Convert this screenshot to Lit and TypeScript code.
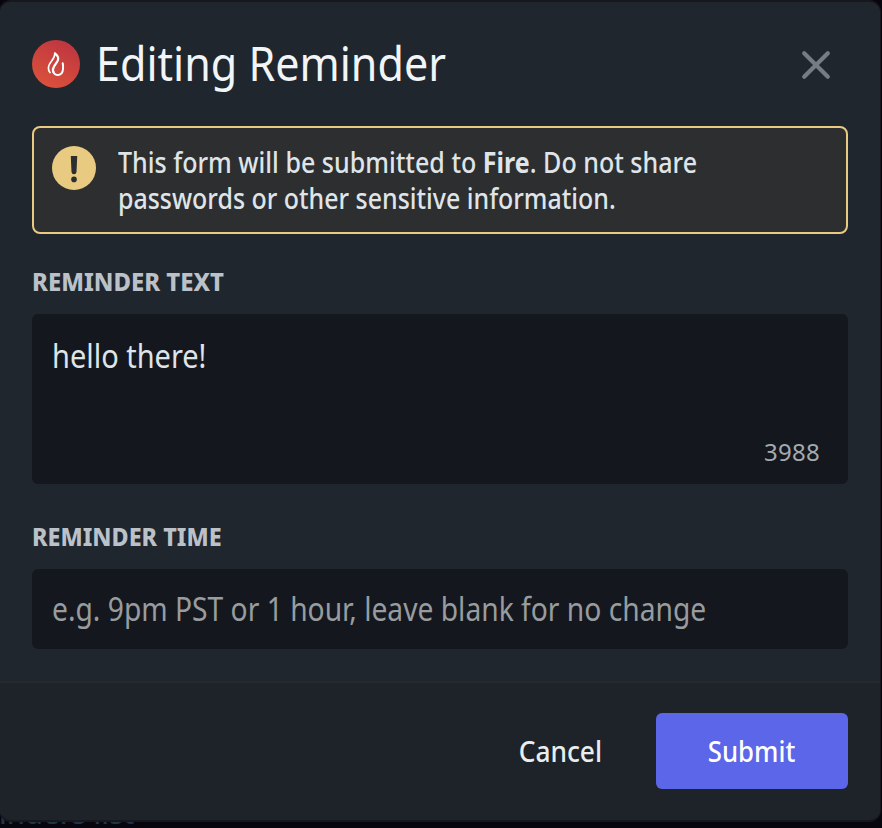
import { LitElement, html, css, svg } from "lit";
import { customElement } from "lit/decorators.js";

const logo = svg`<svg class="logo" viewBox="0 0 48 48">
  <defs><linearGradient id="g" x1="0.75" y1="0" x2="0.25" y2="1"><stop offset="0" stop-color="#bd3540"/><stop offset="1" stop-color="#dc523b"/></linearGradient></defs>
  <circle cx="24" cy="24" r="24" fill="url(#g)"/>
  <g fill="none" stroke="#fff" stroke-linecap="round" stroke-linejoin="round">
    <path stroke-width="1.700" d="M22.800 13C23.300 19.800 16.600 22 16.400 27.500C16.300 29.800 16.900 31.200 18 32.500"/>
    <path stroke-width="2.200" d="M23.200 13.700C28.200 17.500 26 21.200 23.300 24.500C21 27.500 20.300 30 21.500 32.300"/>
    <path stroke-width="2" d="M21.300 31.500C22 36 30.500 37 31 29C31.200 26.800 31.100 25 30.700 23.300"/>
  </g>
  </svg>`;

@customElement("app-root")
export class AppRoot extends LitElement {
  static styles = css`
    :host { display: block; height: 828px; position: relative; overflow: hidden; background: #07050e;
      font-family: "Noto Sans", sans-serif; color: #dfe4e8; }
    * { box-sizing: border-box; }
    .behind { position: absolute; left: -1px; top: 798px; font-weight: 500; font-size: 29px; line-height: 30px; height: 30px; color: #1f3444; white-space: nowrap; }
    .modal { position: relative; width: 882px; height: 822px; margin-left: -1px; border: solid #17181d; border-width: 2px 1px 2px 1px;
      border-radius: 12px; background: #20262d; display: flex; flex-direction: column; overflow: hidden; }
    .body { height: 679px; padding: 38px 32px 0; }
    header { display: flex; align-items: center; height: 48px; }
    .logo { width: 48px; height: 48px; flex: none; }
    h1 { margin: -2px 0 0 16px; flex: 1; font-weight: 400; font-size: 47px; line-height: 60px; color: #f2f5f7; white-space: nowrap; }
    .close { width: 32px; height: 32px; margin: 2px 16px 0 0; }
    .warning { display: flex; margin-top: 38px; height: 108px; border: 2px solid #e8ca80; border-radius: 8px; background: #2d2e30; padding: 18px; }
    .warn-icon { width: 44px; height: 44px; flex: none; }
    .warning p { margin: -2px 0 0 22px; font-weight: 500; font-size: 28px; line-height: 36px; white-space: nowrap; }
    .warning b { font-weight: 700; }
    .label { margin-top: 33px; height: 30px; font-weight: 800; font-size: 24px; line-height: 29px; color: #bac1c9; white-space: nowrap; }
    .field { margin-top: 17px; border-radius: 6px; background: #14181e; padding: 20px; font-size: 32px; line-height: 44px; white-space: nowrap; }
    .area { height: 170px; display: flex; flex-direction: column; align-items: flex-start; justify-content: space-between; padding-bottom: 17px; }
    .count { align-self: flex-end; margin-right: 8px; font-size: 24px; line-height: 30px; color: #a4aab0; letter-spacing: 0.3px; }
    .label.time { margin-top: 38px; }
    .line { height: 80px; padding-top: 18px; color: #989c9f; }
    footer { flex: 1; border-top: 2px solid #25282d; background: #1e2229; display: flex; align-items: flex-start; justify-content: flex-end; padding: 30px 32px 0; }
    button { border: 0; padding: 0; height: 76px; font: 500 28px/76px "Noto Sans", sans-serif; color: #e8edf0; background: none; border-radius: 6px; white-space: nowrap; }
    .cancel { width: 192px; }
    .submit { width: 192px; background: #5b66e8; color: #fff; }
    .t { display: inline-block; transform-origin: 0 50%; }
    .t1 { transform: scaleX(0.916); }
    .t2 { transform: scaleX(0.895); }
    .t3 { transform: scaleX(0.891); }
    .t4 { transform: scaleX(0.995); }
    .t5 { transform: scaleX(0.905); }
    .t6 { transform: scaleX(0.972); }
    .t7 { transform: scaleX(0.882); }
    .t8 { transform: scaleX(0.94); transform-origin: center; }
    .t9 { transform: scaleX(0.92); transform-origin: center; }
  `;

  render() {
    return html`
      <div class="behind">inders list</div>
      <div class="modal">
        <div class="body">
          <header>
            ${logo}
            <h1><span class="t t1">Editing Reminder</span></h1>
            <svg class="close" viewBox="0 0 32 32"><path d="M4.200 4.200L27.800 27.800M27.800 4.200L4.200 27.800" stroke="#757c84" stroke-width="4.200" stroke-linecap="round" fill="none"/></svg>
          </header>
          <div class="warning">
            <svg class="warn-icon" viewBox="0 0 44 44"><circle cx="22" cy="22" r="22" fill="#e8ca80"/><path d="M19.300 10h5.400q.5 0 .5.600l-.7 15.400q-.3 2.200-2.500 2.200t-2.500-2.200l-.7-15.400q0-.6.500-.6z" fill="#2d2e30"/><circle cx="22" cy="33.400" r="2.800" fill="#2d2e30"/></svg>
            <p><span class="t t2">This form will be submitted to <b>Fire</b>. Do not share</span><br><span class="t t3">passwords or other sensitive information.</span></p>
          </div>
          <div class="label"><span class="t t4">REMINDER TEXT</span></div>
          <div class="field area"><span class="t t5">hello there!</span><span class="count">3988</span></div>
          <div class="label time"><span class="t t6">REMINDER TIME</span></div>
          <div class="field line"><span class="t t7">e.g. 9pm PST or 1 hour, leave blank for no change</span></div>
        </div>
        <footer>
          <button class="cancel"><span class="t t8">Cancel</span></button>
          <button class="submit"><span class="t t9">Submit</span></button>
        </footer>
      </div>`;
  }
}
